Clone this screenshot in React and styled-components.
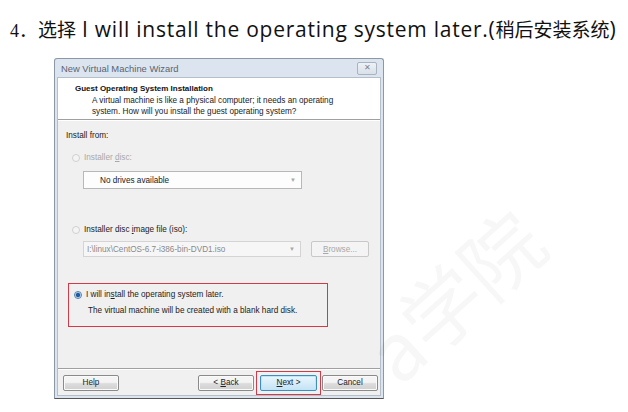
import React from 'react'
import styled, { createGlobalStyle } from 'styled-components'

const GlobalStyle = createGlobalStyle`
  html, body {
    margin: 0;
    padding: 0;
    background: #ffffff;
  }
  body {
    width: 628px;
    height: 412px;
    overflow: hidden;
  }
`

const Page = styled.div`
  position: relative;
  width: 628px;
  height: 412px;
  overflow: hidden;
  background: #fff;
`

const Heading = styled.div`
  display: flex;
  align-items: baseline;
  padding: 15px 0 0 10px;
  height: 43px;
  box-sizing: border-box;
  font-family: 'Noto Sans CJK SC', sans-serif;
  font-size: 19px;
  color: #111;
  white-space: nowrap;
`

const Num = styled.span`
  font-family: 'Liberation Serif', 'Noto Sans CJK SC', serif;
  font-size: 18px;
  width: 28px;
`

const Latin = styled.span`
  font-family: 'Open Sans', sans-serif;
  font-size: 21px;
  letter-spacing: 0.75px;
  margin-left: ${({ $ml }) => $ml || 0}px;
`

const Dialog = styled.div`
  margin: 15px 0 0 54px;
  width: 330px;
  height: 341px;
  box-sizing: border-box;
  border: 1px solid #8c98a6;
  border-bottom-color: #555;
  border-radius: 3px 3px 0 0;
  background: #dce5ef;
  display: flex;
  flex-direction: column;
  padding: 0 2px 2px;
  font-family: 'Liberation Sans', sans-serif;
  font-size: 8.2px;
  color: #222;
`

const TitleBar = styled.div`
  height: 18px;
  display: flex;
  align-items: center;
  justify-content: space-between;
  padding: 0 4px 0 4px;
  font-size: 9.4px;
  color: #5a6470;
`

const CloseBtn = styled.div`
  width: 20px;
  height: 13px;
  box-sizing: border-box;
  border: 1px solid #a9b4c0;
  border-radius: 2px;
  background: linear-gradient(#eef2f6, #d8e0e9);
  display: flex;
  align-items: center;
  justify-content: center;
  color: #7a8590;
  font-size: 8px;
  line-height: 1;
`

const Client = styled.div`
  flex: 1;
  display: flex;
  flex-direction: column;
  background: #f0f0f0;
  border: 1px solid #b5bfca;
`

const Header = styled.div`
  background: #fff;
  height: 42px;
  box-sizing: border-box;
  padding: 5px 0 0 17px;
  border-bottom: 1px solid #a0a0a0;
`

const HeaderTitle = styled.div`
  font-weight: bold;
  font-size: 8px;
  color: #111;
  line-height: 11px;
  margin-bottom: 1px;
`

const HeaderText = styled.div`
  padding-left: 17px;
  line-height: 11px;
  color: #222;
`

const Body = styled.div`
  flex: 1;
  padding: 11px 0 0 8px;
  display: flex;
  flex-direction: column;
  box-shadow: inset 0 1px 0 #fff;
`

const Label = styled.div`
  line-height: 10px;
  color: #222;
`

const RadioRow = styled.label`
  display: flex;
  align-items: center;
  gap: 4px;
  height: 10px;
  margin: ${({ $mt }) => $mt}px 0 0 ${({ $ml }) => $ml}px;
  color: ${({ $disabled }) => ($disabled ? '#a8a8a8' : '#222')};
  line-height: 10px;
`

const Radio = styled.span`
  width: 8px;
  height: 8px;
  box-sizing: border-box;
  border-radius: 50%;
  border: 1px solid ${({ $disabled }) => ($disabled ? '#d0d0d0' : '#5a7ea6')};
  background: ${({ $disabled }) =>
    $disabled ? '#f4f4f4' : 'radial-gradient(circle, #1d5aa8 0 1.8px, #9fc2e8 2.4px, #e6eef7 3px)'};
  flex-shrink: 0;
`

const U = styled.span`
  text-decoration: underline;
`

const FieldRow = styled.div`
  display: flex;
  gap: 10px;
  margin: ${({ $mt }) => $mt}px 0 0 17px;
`

const Select = styled.div`
  width: ${({ $w }) => $w}px;
  height: ${({ $h }) => $h}px;
  box-sizing: border-box;
  border: 1px solid ${({ $disabled }) => ($disabled ? '#d4d4d4' : '#b8b8b8')};
  background: ${({ $disabled }) => ($disabled ? '#f6f6f6' : '#fdfdfd')};
  display: flex;
  align-items: center;
  justify-content: space-between;
  padding: 0 5px 0 ${({ $pl }) => $pl}px;
  color: ${({ $disabled }) => ($disabled ? '#8a8a8a' : '#222')};
`

const Arrow = styled.span`
  color: #a8a8a8;
  font-size: 6px;
`

const SmallButton = styled.div`
  width: 58px;
  height: 16px;
  box-sizing: border-box;
  border: 1px solid #c8c8c8;
  border-radius: 2px;
  background: #f4f4f4;
  color: #a8a8a8;
  display: flex;
  align-items: center;
  justify-content: center;
`

const Highlight = styled.div`
  margin: 26px 0 0 2px;
  width: 260px;
  height: 44px;
  box-sizing: border-box;
  border: 1px solid #d23a48;
  padding: 6px 0 0 5px;
  display: flex;
  flex-direction: column;
`

const SubText = styled.div`
  margin: 6px 0 0 14px;
  line-height: 10px;
  color: #222;
`

const Footer = styled.div`
  height: 27px;
  border-top: 1px solid #a0a0a0;
  box-shadow: inset 0 1px 0 #fff;
  display: flex;
  align-items: center;
  padding: 1px 0 0 5px;
  box-sizing: border-box;
`

const Button = styled.div`
  width: ${({ $w }) => $w || 56}px;
  height: 16px;
  box-sizing: border-box;
  border: 1px solid ${({ $focus }) => ($focus ? '#3c8fc0' : '#8a8a8a')};
  border-radius: 2px;
  background: ${({ $focus }) =>
    $focus ? 'linear-gradient(#eaf6fd, #c4e3f5)' : 'linear-gradient(#f4f4f4 45%, #dcdcdc 55%, #d0d0d0)'};
  box-shadow: inset 0 0 0 1px ${({ $focus }) => ($focus ? '#bfe6f7' : '#fafafa')};
  color: #222;
  display: flex;
  align-items: center;
  justify-content: center;
  margin-left: ${({ $ml }) => $ml || 0}px;
`

const RedFrame = styled.div`
  margin-left: 2px;
  padding: 3px;
  border: 1px solid #d23a48;
  display: flex;
`

const Watermark = styled.div`
  position: absolute;
  left: 376px;
  top: 322px;
  height: 80px;
  line-height: 80px;
  transform: rotate(-42deg);
  transform-origin: 0 50%;
  font-family: 'Noto Sans CJK SC', sans-serif;
  font-size: 80px;
  color: rgba(0, 0, 0, 0.03);
  white-space: nowrap;
  pointer-events: none;
`

export default function App() {
  return (
    <Page>
      <GlobalStyle />
      <Heading>
        <Num>4．</Num>
        <span>选择</span>
        <Latin $ml={6}>I will install the operating system later.(</Latin>
        <span>稍后安装系统</span>
        <Latin>)</Latin>
      </Heading>
      <Dialog>
        <TitleBar>
          <span>New Virtual Machine Wizard</span>
          <CloseBtn>✕</CloseBtn>
        </TitleBar>
        <Client>
          <Header>
            <HeaderTitle>Guest Operating System Installation</HeaderTitle>
            <HeaderText>
              A virtual machine is like a physical computer; it needs an operating
              <br />
              system. How will you install the guest operating system?
            </HeaderText>
          </Header>
          <Body>
            <Label>Install from:</Label>
            <RadioRow $mt={12} $ml={6} $disabled>
              <Radio $disabled />
              <span>
                Installer <U>d</U>isc:
              </span>
            </RadioRow>
            <FieldRow $mt={8}>
              <Select $w={219} $h={18} $pl={16}>
                <span>No drives available</span>
                <Arrow>▼</Arrow>
              </Select>
            </FieldRow>
            <RadioRow $mt={36} $ml={6}>
              <Radio $disabled />
              <span>
                Installer disc <U>i</U>mage file (iso):
              </span>
            </RadioRow>
            <FieldRow $mt={6}>
              <Select $w={218} $h={16} $pl={3} $disabled>
                <span>I:\linux\CentOS-6.7-i386-bin-DVD1.iso</span>
                <Arrow>▼</Arrow>
              </Select>
              <SmallButton>
                <span>
                  <U>B</U>rowse...
                </span>
              </SmallButton>
            </FieldRow>
            <Highlight>
              <RadioRow $mt={0} $ml={0}>
                <Radio />
                <span>
                  I will in<U>s</U>tall the operating system later.
                </span>
              </RadioRow>
              <SubText>The virtual machine will be created with a blank hard disk.</SubText>
            </Highlight>
          </Body>
          <Footer>
            <Button>Help</Button>
            <Button $ml={79}>
              <span>
                &lt; <U>B</U>ack
              </span>
            </Button>
            <RedFrame>
              <Button $focus $w={57}>
                <span>
                  <U>N</U>ext &gt;
                </span>
              </Button>
            </RedFrame>
            <Button $ml={1}>Cancel</Button>
          </Footer>
        </Client>
      </Dialog>
      <Watermark>a学院</Watermark>
    </Page>
  )
}
